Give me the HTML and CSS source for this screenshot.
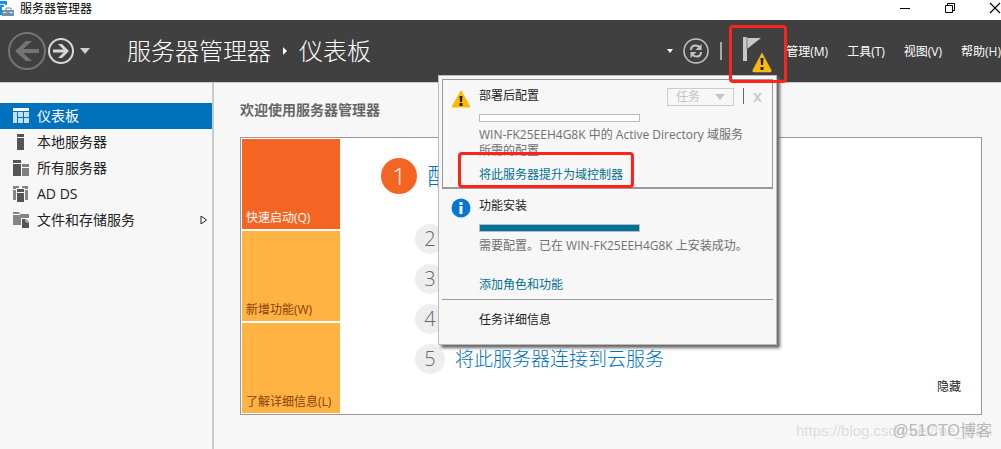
FILE: index.html
```html
<!DOCTYPE html>
<html lang="zh-CN">
<head>
<meta charset="utf-8">
<title>服务器管理器</title>
<link rel="stylesheet" href="styles.css">
</head>
<body>
<div class="window">
  <div class="titlebar">
    <svg class="app-icon" width="14" height="15" viewBox="0 0 14 15"><path d="M0 0h7v4H4v2H2v8H0z" fill="#1e8fe0"/><path d="M0 3.500h5" stroke="#cfe8fa"/><path d="M6 9V7h5v2" fill="none" stroke="#6d8ba3"/><path d="M2 9h12v6H2z" fill="#7392a9"/><path d="M3 11.500h3.500m3 0H13" stroke="#dfe8ee"/></svg>
    <span class="app-name">服务器管理器</span>
    <div class="window-buttons">
      <button type="button" aria-label="最小化"><svg width="12" height="12" viewBox="0 0 12 12"><path d="M1 6.500h10" stroke="#000"/></svg></button>
      <button type="button" aria-label="还原"><svg width="12" height="12" viewBox="0 0 12 12" fill="none" stroke="#000"><path d="M1.500 3.500h7v7h-7zM3.500 3.500v-2h7v7h-2"/></svg></button>
      <button type="button" aria-label="关闭"><svg width="12" height="12" viewBox="0 0 12 12"><path d="M1 1l10 10M11 1L1 11" stroke="#000" stroke-width="1.200"/></svg></button>
    </div>
  </div>

  <header class="header">
    <nav class="history" aria-label="导航">
      <button type="button" aria-label="后退"><svg width="38" height="38" viewBox="0 0 38 38" fill="none" stroke="#747474"><circle cx="19" cy="19" r="18" stroke-width="2"/><path d="M31 19H10" stroke-width="4"/><path d="M24 9h-6L7 19l11 10h6L13 19z" fill="#747474" stroke="none"/></svg></button>
      <button type="button" aria-label="前进"><svg width="26" height="26" viewBox="0 0 26 26" fill="none" stroke="#d8d8d8"><circle cx="13" cy="13" r="12" stroke-width="2"/><path d="M5 13h14" stroke-width="3"/><path d="M10 6h4l7 7-7 7h-4l7-7z" fill="#d8d8d8" stroke="none"/></svg></button>
      <button type="button" aria-label="历史记录"><svg width="10" height="6" viewBox="0 0 10 6"><path d="M0 0h10L5 6z" fill="#d0d0d0"/></svg></button>
    </nav>
    <h1 class="breadcrumb"><span>服务器管理器</span><svg width="4" height="8" viewBox="0 0 4 8"><path d="M0 0l4 4-4 4z" fill="#fff"/></svg><span>仪表板</span></h1>
    <div class="tools">
      <button type="button" aria-label="更多"><svg width="6" height="4" viewBox="0 0 6 4"><path d="M0 0h6L3 4z" fill="#fff"/></svg></button>
      <button type="button" aria-label="刷新"><svg width="26" height="26" viewBox="0 0 26 26" fill="none" stroke="#c4c4c4"><circle cx="13" cy="13" r="12" stroke-width="1.500"/><path d="M8 12c0-3 2-4.500 4.500-4.500 2 0 3.500.7 4.500 2M18 14c0 3-2 4.500-4.500 4.500-2 0-3.500-.7-4.500-2" stroke-width="2"/><path d="M18.500 6v6h-6zM7.500 20v-6h6z" fill="#c4c4c4" stroke="none"/></svg></button>
      <span class="divider"></span>
      <button type="button" class="flag" aria-label="通知"><svg width="30" height="36" viewBox="0 0 30 36"><path d="M1 0h4v24H1z" fill="#c8c8c8"/><path d="M5 1h14L5 12z" fill="#c8c8c8"/><path d="M5 0v12" stroke="#777"/><path d="M20 16L29 33q1 2-1 2H12q-2 0-1-2z" fill="#ffb900" stroke="#e9c77a" stroke-width=".5"/><path d="M18.500 21h3l-.5 7h-2zM18.500 30h3v3h-3z" fill="#222"/></svg></button>
      <nav class="menus">
        <button type="button">管理(M)</button>
        <button type="button">工具(T)</button>
        <button type="button">视图(V)</button>
        <button type="button">帮助(H)</button>
      </nav>
    </div>
  </header>

  <div class="body">
    <nav class="sidebar">
      <a href="#dashboard" class="active"><svg width="16" height="16" viewBox="0 0 16 16"><path d="M0 0h16v3H0z" fill="#fff"/><path d="M0 4h4v11H0zM5 4h5v5H5zM11 4h5v5h-5zM5 10h5v5H5zM11 10h5v5h-5z" fill="#c5e0f3"/></svg>仪表板</a>
      <a href="#local"><svg width="16" height="16" viewBox="0 0 16 16" fill="#555"><path d="M4 0h7v3H4zM4 4h7v12H4z"/></svg>本地服务器</a>
      <a href="#all"><svg width="16" height="16" viewBox="0 0 16 16"><path d="M0 0h8v3H0zM0 4h8v12H0z" fill="#555"/><path d="M9 4h7v3H9zM9 8h7v8H9z" fill="#808080"/></svg>所有服务器</a>
      <a href="#adds"><svg width="16" height="16" viewBox="0 0 16 16"><path d="M0 0h6v2H3v1H0zM9 0h6v3h-3V2H9zM0 4h3v10H0zM12 4h3v10h-3z" fill="#858585"/><path d="M4 3h7v3H4zM4 7h7v9H4z" fill="#555"/></svg>AD DS</a>
      <a href="#storage"><svg width="16" height="16" viewBox="0 0 16 16"><path d="M0 0h6l1 2h9v4H8v7H0V3h7V2H0z" fill="#858585"/><path d="M9 7h4l3 3v6H9z" fill="#555"/><path d="M13 7v3h3" fill="none" stroke="#ddd"/></svg>文件和存储服务<svg class="expand" width="8" height="10" viewBox="0 0 8 10"><path d="M1 1l5.500 4L1 9z" fill="#fff" stroke="#222"/></svg></a>
    </nav>

    <main class="main">
      <h2>欢迎使用服务器管理器</h2>
      <section class="welcome">
        <div class="tiles">
          <button type="button" class="tile current">快速启动(Q)</button>
          <button type="button" class="tile">新增功能(W)</button>
          <button type="button" class="tile">了解详细信息(L)</button>
        </div>
        <ol class="steps">
          <li class="first"><span class="num">1</span><a href="#configure">配</a></li>
          <li><span class="num">2</span></li>
          <li><span class="num">3</span></li>
          <li><span class="num">4</span></li>
          <li><span class="num">5</span><a href="#cloud">将此服务器连接到云服务</a></li>
        </ol>
        <button type="button" class="hide">隐藏</button>
      </section>
    </main>
  </div>

  <aside class="popup">
    <section class="task boxed">
      <svg class="status" width="20" height="18" viewBox="0 0 20 18"><path d="M10 0l9 16q.5 1.500-1 1.500H2q-1.500 0-1-1.500z" fill="#ffb900"/><path d="M8.500 6h3l-.5 6H9zM8.500 13h3v3h-3z" fill="#222"/></svg>
      <div class="detail">
        <div class="task-head">
          <h3>部署后配置</h3>
          <button type="button" class="task-menu" disabled>任务<svg width="10" height="6" viewBox="0 0 10 6"><path d="M0 0h10L5 6z" fill="#c4c4c4"/></svg></button>
          <span class="task-divider"></span>
          <button type="button" class="dismiss" aria-label="关闭任务" disabled><svg width="9" height="9" viewBox="0 0 9 9"><path d="M1 0l7 9M8 0L1 9" stroke="#c8c8c8" stroke-width="2"/></svg></button>
        </div>
        <div class="progress"></div>
        <p>WIN-FK25EEH4G8K 中的 Active Directory 域服务所需的配置</p>
        <a class="marked" href="#promote">将此服务器提升为域控制器</a>
      </div>
    </section>
    <section class="task">
      <svg class="status" width="20" height="20" viewBox="0 0 20 20"><circle cx="10" cy="10" r="9.500" fill="#0078d4"/><path d="M8.500 4h3v3h-3zM8.500 8h3v8h-3z" fill="#fff"/></svg>
      <div class="detail">
        <h3>功能安装</h3>
        <div class="progress done"></div>
        <p>需要配置。已在 WIN-FK25EEH4G8K 上安装成功。</p>
        <a href="#roles">添加角色和功能</a>
      </div>
    </section>
    <button type="button" class="all-tasks">任务详细信息</button>
  </aside>

  <div class="watermark url">https://blog.csdn.net/me_jean</div>
  <div class="watermark owner">@51CTO博客</div>
</div>
</body>
</html>
```
FILE: styles.css
```css
* { box-sizing: border-box; }
body {
  margin: 0;
  background: #f7f7f7;
  color: #222;
  font: 12px/16px "Open Sans", "Noto Sans CJK SC", sans-serif;
}
button {
  padding: 0;
  border: 0;
  background: none;
  color: inherit;
  font: inherit;
}
a { color: inherit; text-decoration: none; }
svg { display: block; flex: none; }
h1, h2, h3, p, ol { margin: 0; padding: 0; font-weight: 400; }

.window {
  position: relative;
  display: flex;
  flex-direction: column;
  min-height: 100vh;
  overflow: hidden;
}
.titlebar {
  display: flex;
  align-items: center;
  gap: 6px;
  height: 20px;
  background: #fff;
  color: #000;
}
.app-icon { margin-bottom: 4px; }
.app-name { padding-bottom: 2px; }
.window-buttons {
  display: flex;
  gap: 33px;
  margin: 0 0 5px auto;
}

.header {
  display: flex;
  align-items: center;
  height: 62px;
  background: #404040;
  color: #fff;
}
.history {
  display: flex;
  align-items: center;
  gap: 2px;
  padding-left: 8px;
}
.history button:last-child { margin-left: 4px; }
.breadcrumb {
  display: flex;
  align-items: center;
  gap: 12px;
  padding-left: 37px;
  font-size: 24px;
  line-height: 32px;
  font-weight: 300;
  white-space: nowrap;
}
.tools {
  display: flex;
  align-items: center;
  margin-left: auto;
}
.tools > button + button { margin-left: 10px; }
.divider {
  width: 2px;
  height: 18px;
  margin-left: 11px;
  background: #aaa;
}
.flag {
  position: relative;
  margin: 8px 0 0 20px;
}
.flag::after {
  content: "";
  position: absolute;
  z-index: 3;
  inset: -12px -15px -10px -13px;
  border: 3px solid #ff2419;
  border-radius: 4px;
}
.menus {
  display: flex;
  gap: 19px;
  margin: 2px 0 0 14px;
  white-space: nowrap;
}

.body { display: flex; flex: 1; }
.sidebar {
  flex: none;
  width: 214px;
  padding-top: 20px;
  border-right: 2px solid #c9c9c9;
  border-top: 1px solid #ccc;
}
.sidebar a {
  display: flex;
  align-items: center;
  gap: 8px;
  height: 26px;
  padding: 0 4px 0 13px;
  font-size: 14px;
}
.sidebar .active { background: #0072bc; color: #fff; }
.expand { margin-left: auto; }

.main {
  flex: 1;
  min-width: 0;
  padding: 17px 19px 34px 26px;
  border-top: 1px solid #ccc;
}
.main h2 {
  color: #666;
  font-size: 14px;
  line-height: 20px;
  font-weight: 700;
}
.welcome {
  display: flex;
  margin-top: 17px;
  padding: 1px;
  border: 1px solid #999;
  background: #fff;
}
.tiles {
  display: grid;
  gap: 2px;
  flex: none;
  width: 98px;
}
.tile {
  display: flex;
  align-items: flex-end;
  height: 90px;
  padding: 0 0 3px 4px;
  background: #ffb342;
  color: #8a3d0e;
  white-space: nowrap;
}
.tile.current { background: #f46523; color: #fff; }
.steps {
  display: grid;
  gap: 10px;
  align-content: start;
  padding: 19px 0 0 75px;
  list-style: none;
  font-size: 20px;
  font-weight: 300;
  line-height: 30px;
}
.steps li {
  display: flex;
  align-items: center;
  gap: 10px;
}
.steps .first {
  margin: 0 0 20px -34px;
  font-size: 24px;
}
.steps a { color: #0072bc; font-size: 19px; white-space: nowrap; }
.steps .first a { font-size: 24px; }
.num {
  width: 30px;
  border-radius: 50%;
  background: #eee;
  color: #666;
  text-align: center;
}
.first .num {
  width: 36px;
  line-height: 36px;
  background: #f46523;
  color: #fff;
}
.hide {
  align-self: flex-end;
  margin: 0 19px 18px auto;
}

.popup {
  position: absolute;
  z-index: 2;
  top: 75px;
  right: 224px;
  width: 339px;
  padding: 3px;
  border: 1px solid #bbb;
  background: #f7f7f7;
  box-shadow: 3px 3px 3px #666;
}
.task {
  display: flex;
  gap: 8px;
  padding: 9px 9px 6px;
  border-bottom: 1px solid #999;
}
.boxed {
  padding: 6px 8px 4px;
  border: 1px solid #999;
  border-bottom-width: 2px;
}
.detail { flex: 1; min-width: 0; }
.boxed .status { margin-top: 4px; }
.task-head { display: flex; align-items: center; }
.task h3 { font-size: 12px; }
.task-menu {
  display: flex;
  align-items: center;
  gap: 15px;
  height: 18px;
  margin: 2px 9px 0 auto;
  padding: 0 8px;
  border: 1px solid #ccc;
  color: #c4c4c4;
}
.task-divider { width: 1px; height: 16px; background: #666; }
.dismiss { margin: 2px 2px 0 9px; }
.progress {
  width: 161px;
  height: 8px;
  border: 1px solid #bbb;
  background: #fff;
}
.boxed .progress { margin: 8px 0 5px; }
.progress.done { margin: 10px 0 6px; background: #007299; }
.task p { padding-right: 16px; color: #707070; }
.task a {
  position: relative;
  display: inline-block;
  margin-top: 23px;
  color: #00708f;
}
.boxed a { margin-top: 8px; }
.marked::after {
  content: "";
  position: absolute;
  inset: -15px -11px -5px -21px;
  border: 3px solid #ff2419;
  border-radius: 4px;
}
.all-tasks { margin: 12px 0 13px 37px; }

.watermark {
  position: absolute;
  z-index: 1;
  bottom: 8px;
  font: 16px/20px "Liberation Sans", "Noto Sans CJK SC", sans-serif;
  white-space: nowrap;
}
.url { right: 9px; color: #ddd; font-size: 15px; }
.owner { right: 9px; color: #b9b9b9; }
```
